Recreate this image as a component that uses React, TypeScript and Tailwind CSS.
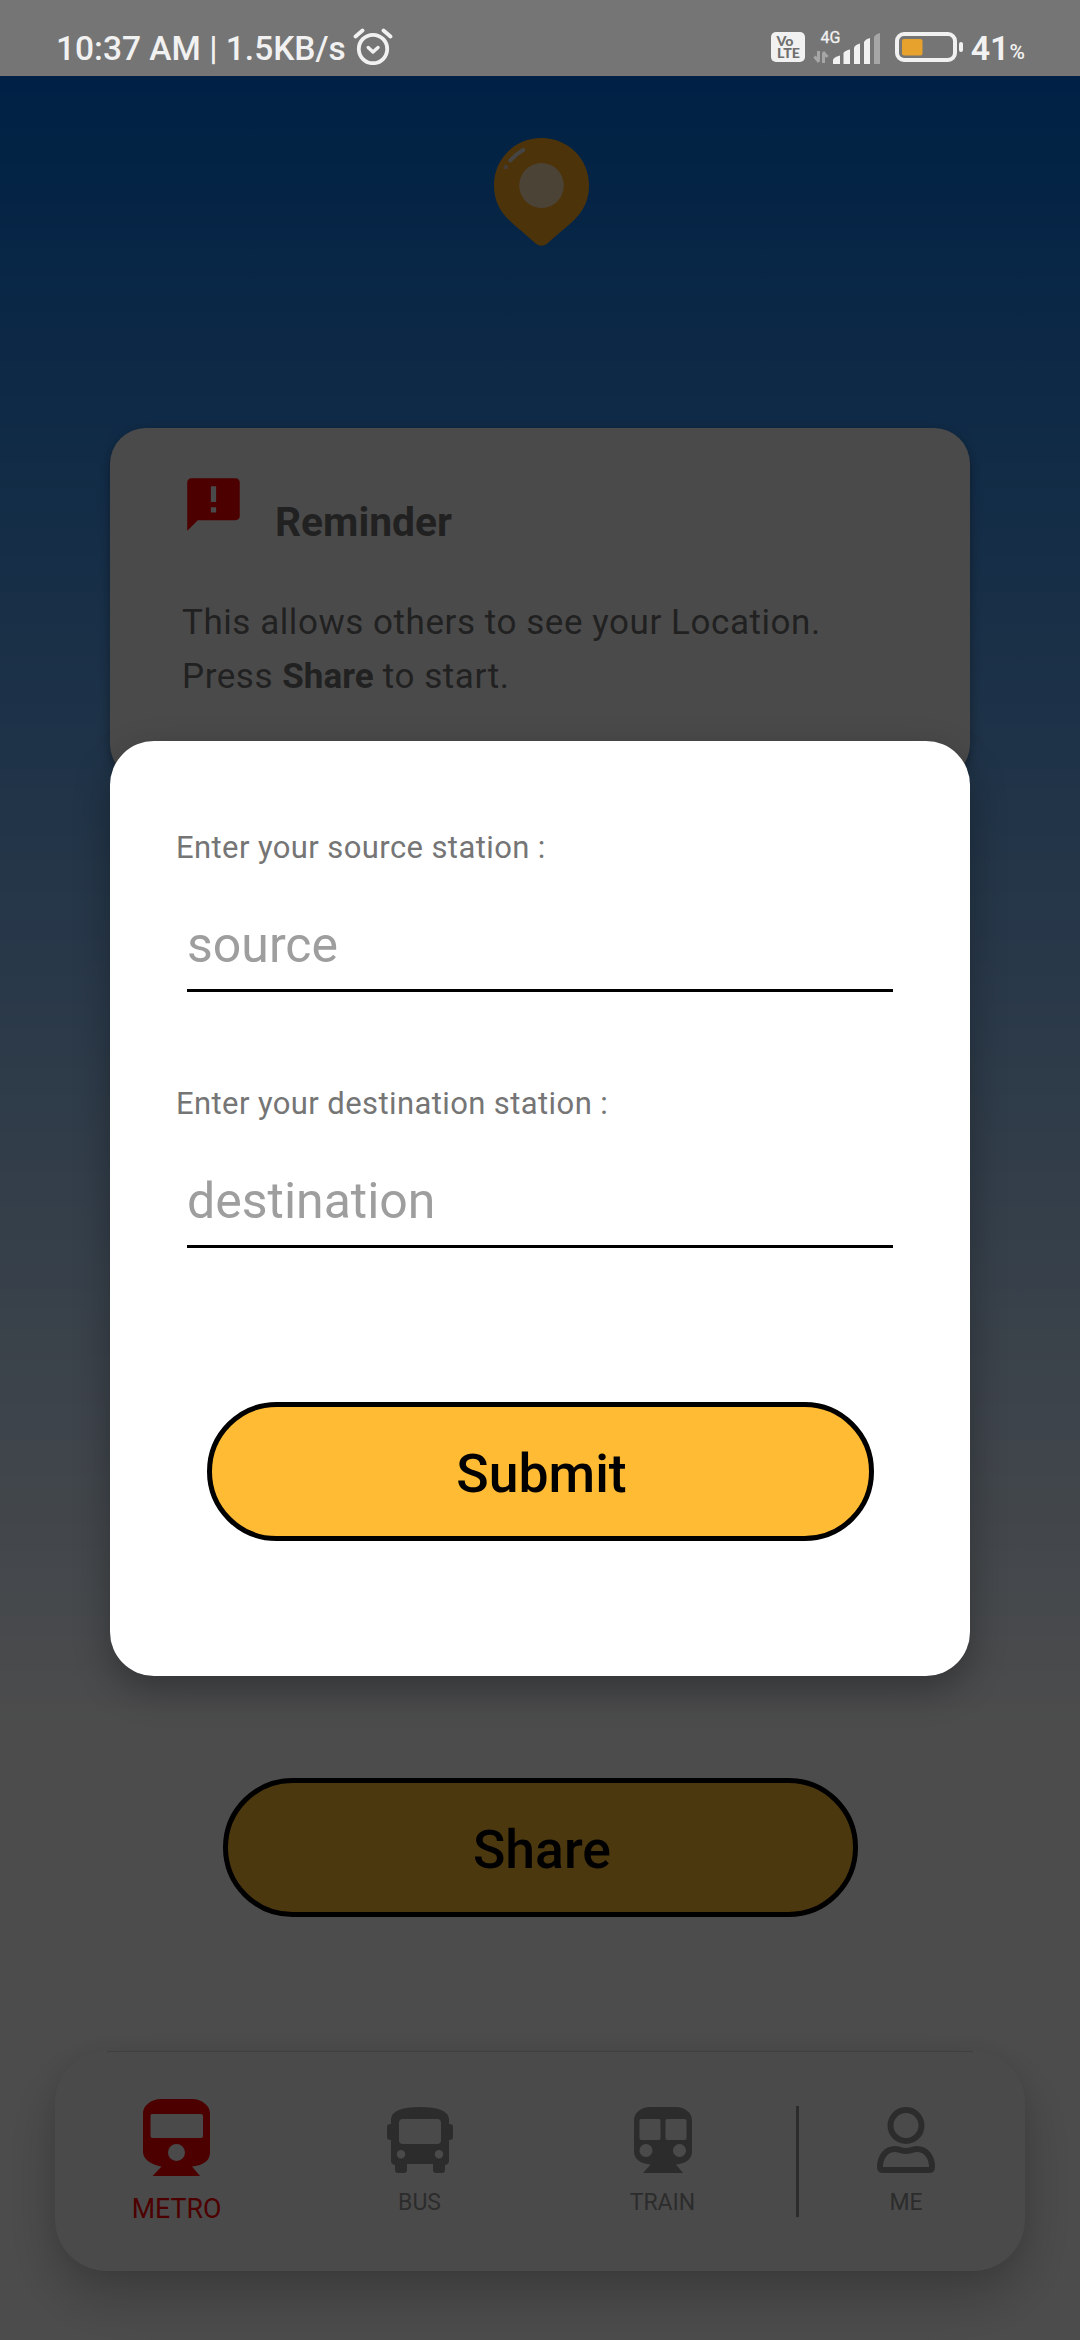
import React from "react";

function AlarmIcon() {
  return (
    <svg viewBox="0 0 40 38" className="ml-[7px] h-[38px] w-[40px] shrink-0" fill="none" stroke="#f1f1f1" strokeLinecap="round">
      <circle cx="20" cy="22" r="14.2" strokeWidth="3.8" />
      <path d="M2.5 9.5L9.5 3.5M30.5 3.5L37.5 9.5" strokeWidth="3.8" />
      <path d="M15.2 20.5L20 25L25 20.5" strokeWidth="3.4" strokeLinejoin="round" />
    </svg>
  );
}

function VolteBadge() {
  return (
    <svg viewBox="0 0 34 30" className="mb-[3px] h-[30px] w-[34px] shrink-0" fontFamily="Lato" fontWeight="900" fill="#6f6f6f">
      <rect width="34" height="30" rx="5" fill="#f1f1f1" />
      <text x="5.500" y="13.500" fontSize="12.500" textLength="17" lengthAdjust="spacingAndGlyphs">Vo</text>
      <text x="6" y="25.500" fontSize="12.500" textLength="23" lengthAdjust="spacingAndGlyphs">LTE</text>
    </svg>
  );
}

function Signal() {
  return (
    <svg viewBox="0 0 68 36" className="ml-[8px] h-[36px] w-[68px] shrink-0">
      <text x="7.500" y="14" fontFamily="Roboto" fontSize="16" fill="#f1f1f1" stroke="#f1f1f1" strokeWidth="0.3" textLength="20">4G</text>
      <path d="M5.5 22v10.5M6 33L1.5 27.500M10.5 34V23.500M10 23L14.500 28" stroke="#a6a6a6" strokeWidth="3" fill="none" />
      <g fill="#f1f1f1">
        <path d="M20 30.500q2-3 7-4v8.500h-7z" />
        <path d="M30.500 24q1.500-2.500 6.500-3.500v14.500h-6.500z" />
        <path d="M41 18.500q1.500-3 6-4v20.500h-6z" />
        <path d="M51 13q1.500-3 6-4v26h-6z" />
      </g>
      <path d="M61 8q1.500-3 6-4v31h-6z" fill="#a6a6a6" />
    </svg>
  );
}

function StatusBar() {
  return (
    <header className="flex h-[76px] items-end justify-between bg-[#757575] pr-[55px] pb-[11px] pl-[56px] text-[#f1f1f1]">
      <div className="flex items-end">
        <span className="text-[33.5px] leading-[32px] font-medium whitespace-nowrap">10:37 AM | 1.5KB/s</span>
        <AlarmIcon />
      </div>
      <div className="flex items-end">
        <VolteBadge />
        <Signal />
        <svg viewBox="0 0 70 30" className="mb-[3px] ml-[14px] h-[30px] w-[70px] shrink-0">
          <rect x="2" y="2" width="58" height="26" rx="7" fill="none" stroke="#f1f1f1" strokeWidth="4" />
          <rect x="7" y="7" width="20.500" height="16.500" rx="2" fill="#e7a12d" />
          <rect x="64" y="10" width="4" height="10" rx="2" fill="#f1f1f1" />
        </svg>
        <span className="ml-[6px] text-[34px] leading-[33px] font-semibold">41</span>
        <span className="text-[21px] leading-[26px] font-medium">%</span>
      </div>
    </header>
  );
}

function PinIcon() {
  return (
    <svg viewBox="0 0 96 108" preserveAspectRatio="none" className="h-[108px] w-[95px]">
      <path d="M48 0C21 0 0 21 0 47c0 22 12 33 24 43 8 6.500 13 11 18 15.500q6 4.500 12 0C59 101 64 96.500 72 90c12-10 24-21 24-43C96 21 75 0 48 0z" fill="#ffaa22" />
      <circle cx="48" cy="47.500" r="22.500" fill="#ffe2b8" />
      <path d="M16.500 22.500Q22 16 29.500 12" stroke="#e8e8e8" strokeWidth="4" strokeLinecap="round" fill="none" />
      <circle cx="12" cy="29" r="2.200" fill="#e8c8c0" />
    </svg>
  );
}

function ReminderCard() {
  return (
    <section className="mx-[110px] mt-[182px] h-[352px] rounded-[36px] bg-[#f8f8f8] pt-[45px] pl-[72px] text-[#717171] shadow-[0_4px_12px_rgba(0,0,0,0.35)]">
      <div className="flex">
        <svg viewBox="0 0 24 24" className="h-[63px] w-[63px]" fill="#ff0000">
          <path fillRule="evenodd" d="M20.500 2H3.500c-.8 0-1.500.7-1.500 1.500V22l4-4h14.500c.8 0 1.500-.7 1.500-1.500v-13c0-.8-.7-1.500-1.500-1.500zM13 15h-2v-2h2v2zm0-4h-2V5h2v6z" />
        </svg>
        <h2 className="mt-[25px] ml-[30px] text-[40.75px] leading-[48px] font-bold">Reminder</h2>
      </div>
      <p className="mt-[50px] text-[35px] leading-[54px] tracking-[0.55px]">
        This allows others to see your Location.
        <br />
        Press <b className="tracking-normal">Share</b> to start.
      </p>
    </section>
  );
}

function NavItem({ label, active, children }: { label: string; active?: boolean; children: React.ReactNode }) {
  return (
    <div
      className={
        active
          ? "flex w-[243px] shrink-0 flex-col items-center pt-[48px] text-[26.75px] leading-[30px] text-[#ff0000]"
          : "flex w-[243px] shrink-0 flex-col items-center pt-[56px] text-[23px] leading-[26px] text-[#959595]"
      }
    >
      {children}
      <span className={active ? "mt-[18px]" : "mt-[17px]"}>{label}</span>
    </div>
  );
}

function BottomNav() {
  return (
    <nav className="relative mx-[55px] mt-[134px] flex h-[220px] rounded-[52px] bg-[#f8f8f8] shadow-[0_26px_54px_rgba(0,0,0,0.22),0_2px_22px_rgba(0,0,0,0.06)]">
      <div className="absolute top-0 right-[52px] left-[52px] h-px bg-[#d8d8d8]" />
      <NavItem label="METRO" active>
        <svg viewBox="0 0 67 77" className="h-[77px] w-[67px]" fill="#ff0000">
          <path fillRule="evenodd" d="M18 0h31C59 0 67 7 67 14v40c0 8-8 13-18 13.500L57 77H9.500L18.500 67.500C8 66 0 60 0 53V14C0 7 8 0 18 0zM9 15q-1.500 0-1.500 2v20q0 2 2 2h48.500q2 0 2-2V17q0-2-2-2zM33.500 45a8.500 8.500 0 1 0 0 17 8.500 8.500 0 0 0 0-17z" />
        </svg>
      </NavItem>
      <NavItem label="BUS">
        <svg viewBox="0 0 66 66" className="h-[66px] w-[66px]" fill="#959595">
          <path fillRule="evenodd" d="M4 17V12Q5 0 33 0t29 12v5h1q3 0 3 3v10q0 3-3 3h-1v21q0 3-4 4v5q0 3-3 3h-6q-3 0-3-3v-6H20v6q0 3-3 3h-6q-3 0-3-3v-5q-4-1-4-4V33H3q-3 0-3-3V20q0-3 3-3zM16 12q-4 0-4 4v17q0 4 4 4h34q4 0 4-4V16q0-4-4-4zM14 43a4.200 4.200 0 1 0 0 8.400 4.200 4.200 0 0 0 0-8.400zM52 43a4.200 4.200 0 1 0 0 8.400 4.200 4.200 0 0 0 0-8.400z" />
        </svg>
      </NavItem>
      <NavItem label="TRAIN">
        <svg viewBox="0 0 58 66" className="h-[66px] w-[58px]" fill="#959595">
          <path fillRule="evenodd" d="M16 0h26C51 0 58 6 58 13v32c0 7-7 12-16 12.500L49 66H9L16.500 57.500C7 57 0 52 0 45V13C0 6 7 0 16 0zM7 12q-1.500 0-1.500 2v17q0 2 2 2h17q2 0 2-2V14q0-2-2-2zM33 12q-1.500 0-1.500 2v17q0 2 2 2h17q2 0 2-2V14q0-2-2-2zM12 37a6.500 6.500 0 1 0 0 13 6.500 6.500 0 0 0 0-13zM45.500 37a6.500 6.500 0 1 0 0 13 6.500 6.500 0 0 0 0-13z" />
        </svg>
      </NavItem>
      <div className="mt-[55px] ml-[12px] h-[111px] w-[3px] shrink-0 bg-[#959595]" />
      <div className="mr-[12px] flex min-w-0 flex-1 justify-center">
        <NavItem label="ME">
          <svg viewBox="0 0 58 66" className="h-[66px] w-[58px]" fill="none" stroke="#959595" strokeWidth="6">
            <circle cx="29" cy="18.500" r="15.500" />
            <path strokeLinejoin="round" d="M3 60c0-10 6-18 15-18 4 0 6 2 11 2s7-2 11-2c9 0 15 8 15 18q0 3-3 3H6q-3 0-3-3z" />
          </svg>
        </NavItem>
      </div>
    </nav>
  );
}

function Field({ label, placeholder }: { label: string; placeholder: string }) {
  return (
    <label className="block h-[256px] pl-[66px] text-[31px] leading-[36px] tracking-[0.4px] text-[#757575]">
      {label}
      <input
        placeholder={placeholder}
        className="mt-[40px] ml-[11px] block h-[86px] w-[706px] border-b-[3px] border-black bg-transparent pb-[5px] text-[50px] tracking-normal text-black placeholder:text-[#9e9e9e]"
      />
    </label>
  );
}

function StationDialog() {
  return (
    <div className="absolute inset-x-0 top-[76px] bottom-0 bg-black/70 pt-[665px]">
      <div role="dialog" className="mx-[110px] h-[935px] rounded-[44px] bg-white pt-[89px] shadow-[0_14px_36px_rgba(0,0,0,0.3)]">
        <Field label="Enter your source station :" placeholder="source" />
        <Field label="Enter your destination station :" placeholder="destination" />
        <button className="mx-auto mt-[60px] block h-[139px] w-[667px] rounded-full border-[5.500px] border-black bg-[#ffbb33] pt-[6px] pl-[3px] text-[53.5px] font-medium text-black">
          Submit
        </button>
      </div>
    </div>
  );
}

export default function App() {
  return (
    <div className="relative flex h-[2340px] w-[1080px] flex-col overflow-hidden font-[Roboto,sans-serif]">
      <StatusBar />
      <main className="flex-1 bg-[linear-gradient(180deg,#0070e6_0px,#ffffff_1660px)]">
        <div className="flex justify-center pt-[62px] pl-[2px]">
          <PinIcon />
        </div>
        <ReminderCard />
        <button className="mx-auto mt-[998px] block h-[139px] w-[635px] rounded-full border-[5px] border-black bg-[#ffbb33] pt-[6px] pl-[4px] text-[53.5px] font-medium text-black">
          Share
        </button>
        <BottomNav />
      </main>
      <StationDialog />
    </div>
  );
}
